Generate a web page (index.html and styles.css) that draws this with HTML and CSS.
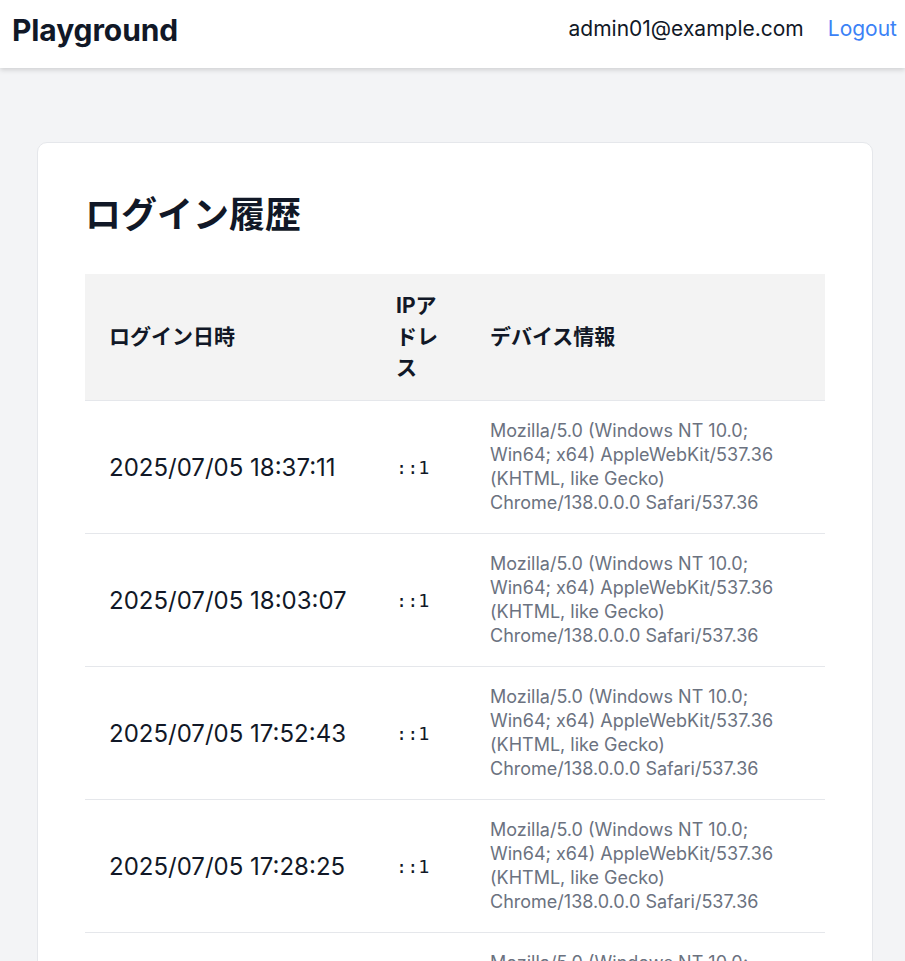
FILE: index.html
```html
<!DOCTYPE html>
<html lang="ja">
<head>
<meta charset="utf-8">
<title>ログイン履歴</title>
<link rel="stylesheet" href="styles.css">
</head>
<body>
<header class="topbar">
  <div class="brand">Playground</div>
  <nav class="user-nav">
    <span class="user-email">admin01@example.com</span>
    <a class="logout" href="#">Logout</a>
  </nav>
</header>
<main class="main">
  <section class="card">
    <h1 class="title">ログイン履歴</h1>
    <table class="history">
      <colgroup>
        <col class="c-date">
        <col class="c-ip">
        <col class="c-dev">
      </colgroup>
      <thead>
        <tr>
          <th>ログイン日時</th>
          <th>IPアドレス</th>
          <th>デバイス情報</th>
        </tr>
      </thead>
      <tbody>
        <tr>
          <td class="date">2025/07/05 18:37:11</td>
          <td class="ip">::1</td>
          <td class="dev">Mozilla/5.0 (Windows NT 10.0; Win64; x64) AppleWebKit/537.36 (KHTML, like Gecko) Chrome/138.0.0.0 Safari/537.36</td>
        </tr>
        <tr>
          <td class="date">2025/07/05 18:03:07</td>
          <td class="ip">::1</td>
          <td class="dev">Mozilla/5.0 (Windows NT 10.0; Win64; x64) AppleWebKit/537.36 (KHTML, like Gecko) Chrome/138.0.0.0 Safari/537.36</td>
        </tr>
        <tr>
          <td class="date">2025/07/05 17:52:43</td>
          <td class="ip">::1</td>
          <td class="dev">Mozilla/5.0 (Windows NT 10.0; Win64; x64) AppleWebKit/537.36 (KHTML, like Gecko) Chrome/138.0.0.0 Safari/537.36</td>
        </tr>
        <tr>
          <td class="date">2025/07/05 17:28:25</td>
          <td class="ip">::1</td>
          <td class="dev">Mozilla/5.0 (Windows NT 10.0; Win64; x64) AppleWebKit/537.36 (KHTML, like Gecko) Chrome/138.0.0.0 Safari/537.36</td>
        </tr>
        <tr>
          <td class="date">2025/07/05 17:10:02</td>
          <td class="ip">::1</td>
          <td class="dev">Mozilla/5.0 (Windows NT 10.0; Win64; x64) AppleWebKit/537.36 (KHTML, like Gecko) Chrome/138.0.0.0 Safari/537.36</td>
        </tr>
      </tbody>
    </table>
  </section>
</main>
</body>
</html>
```
FILE: styles.css
```css
* { box-sizing: border-box; }
html, body {
  margin: 0;
  padding: 0;
}
body {
  background: #f3f4f6;
  font-family: Inter, "Noto Sans CJK JP", sans-serif;
  color: #111827;
}
.topbar {
  height: 68px;
  background: #fff;
  box-shadow: 0 2px 5px rgba(0,0,0,0.15);
  display: flex;
  align-items: flex-start;
  justify-content: space-between;
  padding: 11px 8px 0 12px;
  position: relative;
}
.brand {
  font-size: 30px;
  font-weight: 700;
  line-height: 38px;
  letter-spacing: -0.1px;
}
.user-nav {
  display: flex;
  align-items: center;
  gap: 24px;
  font-size: 21px;
  line-height: 36px;
}
.user-email { color: #111827; }
.logout { color: #3b82f6; text-decoration: none; }
.main {
  padding: 74px 32px 0 37px;
}
.card {
  background: #fff;
  border: 1px solid #e5e7eb;
  border-radius: 10px;
  padding: 47px 47px 40px;
}
.title {
  margin: 0 0 34px;
  font-size: 36px;
  font-weight: 700;
  line-height: 50px;
}
.history {
  width: 100%;
  border-collapse: collapse;
  table-layout: fixed;
}
.c-date { width: 287px; }
.c-ip { width: 94px; }
.history th {
  background: #f3f3f3;
  text-align: left;
  font-size: 21px;
  font-weight: 700;
  line-height: 31px;
  padding: 16px 24px 17px;
  border-bottom: 1px solid #e5e7eb;
}
.history td {
  padding: 18px 24px;
  border-bottom: 1px solid #e5e7eb;
  vertical-align: middle;
}
.date {
  font-size: 24px;
}
.ip {
  font-family: "DejaVu Sans Mono", monospace;
  font-size: 18.5px;
}
.dev {
  font-size: 18px;
  line-height: 24px;
  color: #6b7280;
}
```
